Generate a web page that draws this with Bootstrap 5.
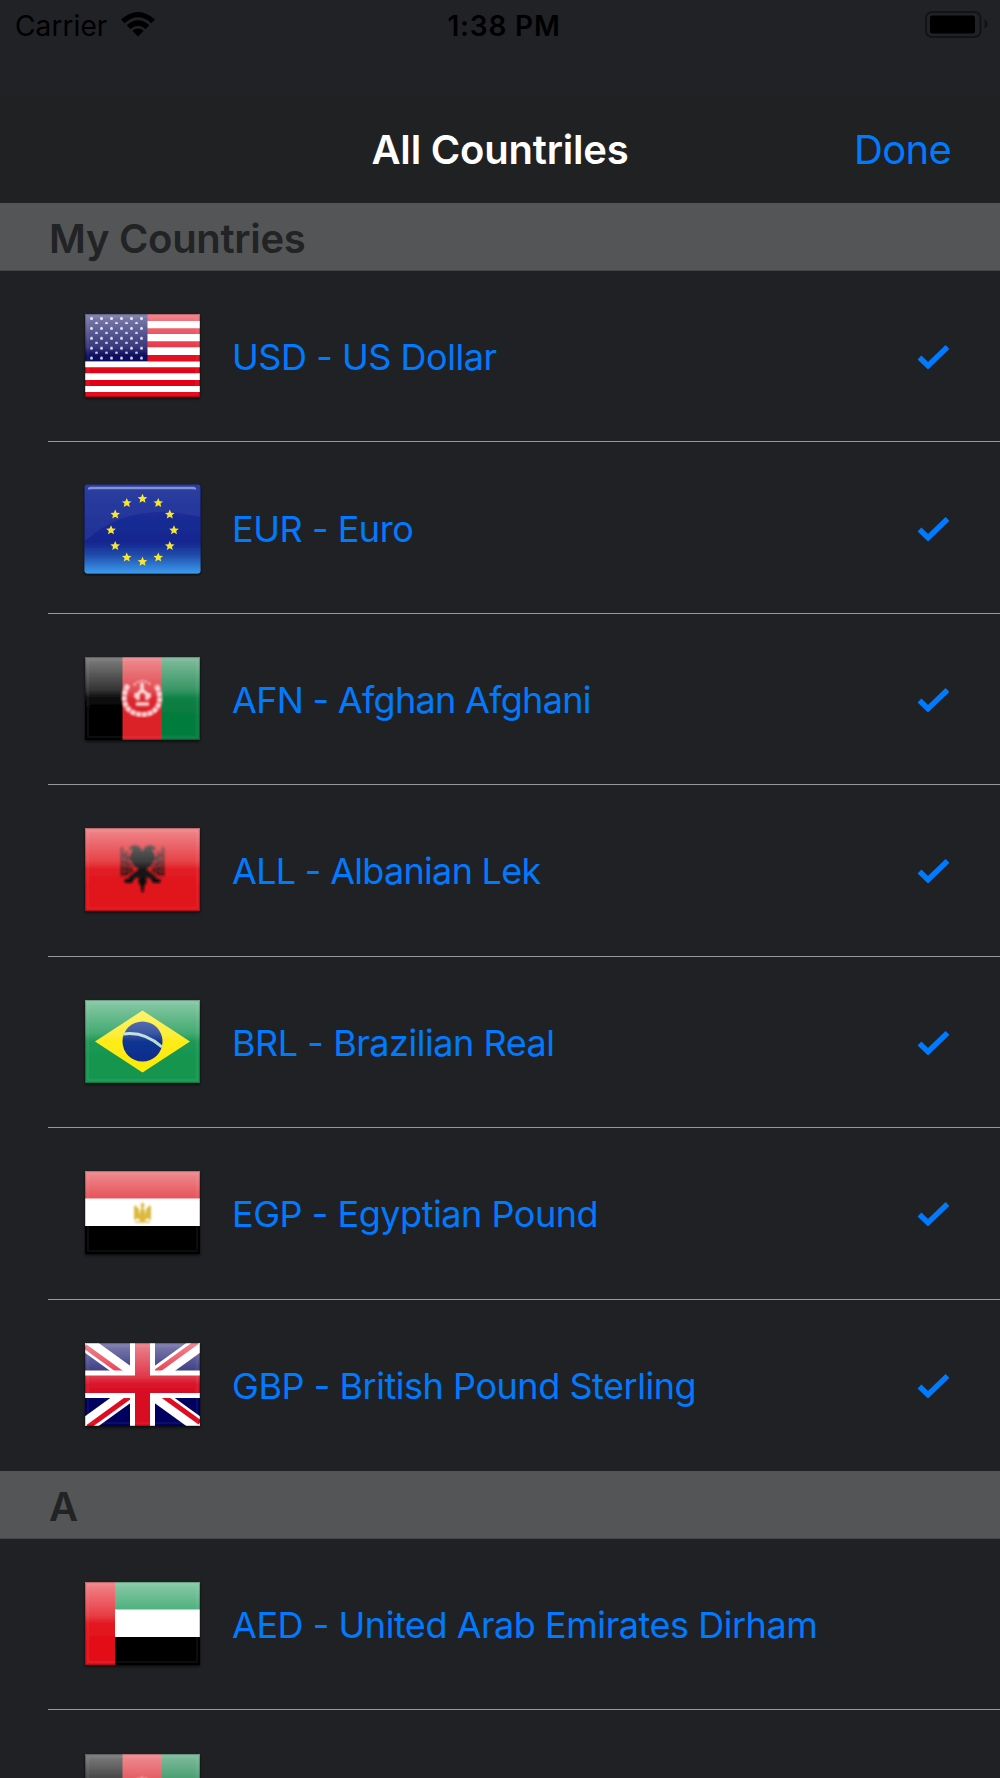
<!DOCTYPE html>
<html lang="en">

<head>
    <meta charset="UTF-8">
    <meta name="viewport" content="width=device-width, initial-scale=1.0">
    <title>All Countriles</title>
    <!-- Bootstrap CSS -->
    <link href="https://cdn.jsdelivr.net/npm/bootstrap@5.3.0/dist/css/bootstrap.min.css" rel="stylesheet">
    <style>
        body {
            height: 1778px;
            background: #202124;
            color: #007aff;
            font-family: Inter, "Liberation Sans", sans-serif;
        }

        .status-bar {
            height: 97px;
            padding: 10px 11px 0 15px;
            background: #212226;
            color: #000;
            font-size: 28px;
            line-height: 33px;
        }

        .status-carrier { letter-spacing: .1px; }
        .status-time { padding-left: 4px; letter-spacing: .8px; font-weight: 600; }
        .wifi { margin: 2px 0 0 14px; }

        .title-bar {
            height: 106px;
            padding: 0 49px;
            background: #1f2122;
        }

        .title-bar h1 { font-size: 40px; line-height: 1; letter-spacing: -.2px; }
        .done-btn { margin-top: -1px; font-size: 40px; line-height: 1; letter-spacing: -.7px; color: #007aff; }

        .section-title {
            height: 68px;
            padding: 5px 0 0 49px;
            background: #545557;
            border-bottom: 1px solid #454648;
            color: #222324;
            font-size: 40px;
            font-weight: 600;
            line-height: 1;
            letter-spacing: -.3px;
        }

        .country-list { height: 1200px; }
        .country-list-short { height: 239px; }

        .country-row {
            height: 171.43px;
            padding: 0 51px 0 34px;
            margin-left: 48px;
            font-size: 36px;
            line-height: 1;
        }

        .country-row:not(:last-child) { border-bottom: 1px solid #97989a; }
        .country-name { margin-left: 29px; padding-top: 2px; letter-spacing: -.46px; }
        .country-name-tight { letter-spacing: -.7px; }
        .flag { width: 121px; height: 95px; margin-top: 1px; }
    </style>
</head>

<body class="overflow-hidden">
    <div class="status-bar d-flex justify-content-between">
        <div class="d-flex col">
            <span class="status-carrier">Carrier</span>
            <svg class="wifi" width="34" height="25" viewBox="0 0 34 25">
                <path d="M0 7.5Q17 -7.5 34 7.5L30.4 11.2Q17 -.5 3.6 11.2Z" />
                <path d="M5.7 13.2Q17 3.2 28.3 13.2L24.6 16.9Q17 10.5 9.4 16.9Z" />
                <path d="M11.3 18.8Q17 14.2 22.7 18.8L17 24.5Z" />
            </svg>
        </div>
        <span class="status-time">1:38 PM</span>
        <div class="col">
            <svg class="d-block ms-auto" width="64" height="29" viewBox="0 0 64 29">
                <rect x="1" y="2" width="54.500" height="25" rx="6" fill="none" stroke="#121315" stroke-width="2" />
                <rect x="5" y="5.500" width="45" height="18" rx="2.5" />
                <path d="M59.500 9.500Q62.800 11 62.800 14T59.500 18.500Z" fill="#121315" />
            </svg>
        </div>
    </div>

    <header class="title-bar d-flex align-items-center">
        <span class="col"></span>
        <h1 class="fw-semibold text-white m-0">All Countriles</h1>
        <div class="col text-end">
            <button type="button" class="done-btn btn p-0 border-0">Done</button>
        </div>
    </header>

    <h2 class="section-title d-flex align-items-center m-0">My Countries</h2>
    <div id="myCountries" class="country-list"></div>
    <h2 class="section-title d-flex align-items-center m-0">A</h2>
    <div id="countriesA" class="country-list-short overflow-hidden"></div>

    <!-- Shared gradients and flag artwork -->
    <svg width="0" height="0" class="position-absolute">
        <defs>
            <linearGradient id="gloss" x2="0" y2="1">
                <stop offset="0" stop-color="#fff" stop-opacity=".5" />
                <stop offset=".4" stop-color="#fff" stop-opacity=".2" />
                <stop offset=".5" stop-color="#fff" stop-opacity=".04" />
                <stop offset=".7" stop-color="#fff" stop-opacity="0" />
            </linearGradient>
            <linearGradient id="euBlue" x2="0" y2="1">
                <stop offset="0" stop-color="#20349c" />
                <stop offset=".65" stop-color="#152690" />
                <stop offset=".78" stop-color="#1e48a8" />
                <stop offset="1" stop-color="#3b9bee" />
            </linearGradient>
            <pattern id="usStars" width="10" height="9.9" patternUnits="userSpaceOnUse">
                <circle cx="6.5" cy="4.5" r="1.5" fill="#dcdcee" />
                <circle cx="1.5" cy="9.4" r="1.5" fill="#dcdcee" />
                <circle cx="11.5" cy="9.4" r="1.5" fill="#dcdcee" />
            </pattern>
            <filter id="soften"><feGaussianBlur stdDeviation=".8" /></filter>
            <filter id="flagShadow" x="-10%" y="-10%" width="120%" height="130%">
                <feGaussianBlur in="SourceGraphic" stdDeviation=".5" result="art" />
                <feDropShadow in="art" dx="0" dy="1.5" stdDeviation="1.5" flood-color="#000" flood-opacity=".7" />
            </filter>

            <g id="us">
                <path fill="#fff" d="M0 0h115v83H0z" />
                <path fill="#e30519" d="M0 0h115v7H0zM0 14.3h115v5.7H0zM0 27.3h115v6H0zM0 41h115v6.5H0zM0 53.3h115v6H0zM0 66h115v6H0zM0 78h115v5H0z" />
                <path fill="#04045c" d="M0 0h62.5v47H0z" />
                <path fill="url(#usStars)" d="M3 1h56v45.5H3z" />
            </g>
            <g id="af">
                <path d="M0 0h38v83H0z" />
                <path fill="#db2028" d="M37.5 0h40v83h-40z" />
                <path fill="#057b3d" d="M77 0h38v83H77z" />
                <g fill="none" stroke="#fad3d5" filter="url(#soften)">
                    <path stroke-width="5" stroke-dasharray="5 .8" d="M43 28C35 42 40 57 57 57.500S79 42 71 28" />
                    <path stroke-width="2" d="M49 28Q57 20 66 28" stroke-dasharray="2 2" />
                    <path stroke-width="3.500" d="M51 47h13M51 41v-5M64 41v-5M53 43v-6l4-4 5 4v6M57 32v-6" />
                </g>
            </g>
            <g id="al">
                <path fill="#e0141b" d="M0 0h115v83H0z" />
                <g filter="url(#soften)" fill="#101010">
                    <path d="M57.500 24C55 15 46 16 44 21l4 1c-2 3-4 6-3 9l4 7 5 3-5 4-4 3-2 3-4 0 1 4 7 0 3-5 4-1-1 5 3 4 0 4 1.500 3 1.500-3v-4l3-4-1-5 4 1 3 5 7 0 1-4-4 0-2-3-4-3-5-4 5-3 4-7c1-3-1-6-3-9l4-1c-2-5-11-6-13.500 3z" />
                    <path fill="none" stroke="#101010" stroke-width="2.500" stroke-opacity=".8" d="M37 19v29M41.500 23v25M78 19v29M73.500 23v25M36 25l10 7M36 33l11 4M36 40l12 1M36 47l12-4M79 25l-10 7M79 33l-11 4M79 40l-12 1M79 47l-12-4" />
                </g>
            </g>
            <g id="br">
                <path fill="#159550" d="M0 0h115v83H0z" />
                <path fill="#fdea10" d="M10 41.500L57.500 10.500 105 41.500 57.500 72.500z" />
                <circle cx="57.500" cy="41.500" r="20" fill="#082d8d" />
                <path d="M38.500 34Q59 31 77 47" fill="none" stroke="#b5dcd5" stroke-width="3" />
            </g>
            <g id="eg">
                <path fill="#dd1a22" d="M0 0h115v28H0z" />
                <path d="M0 55h115v28H0z" />
            </g>
            <g id="egTop">
                <path fill="#fff" d="M0 27.500h115V55H0z" />
                <g filter="url(#soften)" fill="#dcb83e">
                    <path d="M50 34l4 4 0 9-5 2V36zM65 34l-4 4 0 9 5 2V36z" />
                    <path d="M57.500 31l2 3-1 3 2 5 1 6-4 4-4-4 1-6 2-5-1-3z" />
                    <path d="M50 50h15v2H50z" opacity=".7" />
                </g>
            </g>
            <g id="gb">
                <path fill="#00005f" d="M0 0h115v83H0z" />
                <path stroke="#fff" stroke-width="16" d="M0 0L115 83M115 0L0 83" />
                <path stroke="#df0d20" stroke-width="5" d="M0 3.500L57.500 45M115 79.500L57.500 38M112 -1L57.500 38.500M3 84L57.500 44.500" />
                <path fill="#fff" d="M45 0h25v83H45zM0 27.500h115V55H0z" />
                <path fill="#d80a20" d="M50 0h15v83H50zM0 32.500h115V50H0z" />
            </g>
            <g id="ae">
                <path fill="#149653" d="M0 0h115v28H0z" />
                <path d="M0 55h115v28H0z" />
                <path fill="#e20f18" d="M0 0h30v83H0z" />
            </g>
            <g id="aeTop">
                <path fill="#fff" d="M30 27.500h85V55H30z" />
            </g>
        </defs>
    </svg>

    <!-- Bootstrap JS -->
    <script src="https://cdn.jsdelivr.net/npm/bootstrap@5.3.0/dist/js/bootstrap.bundle.min.js"></script>
    <script>
        const myCountries = [
            { flag: 'us', name: 'USD - US Dollar' },
            { flag: 'eu', name: 'EUR - Euro' },
            { flag: 'af', name: 'AFN - Afghan Afghani', tight: true },
            { flag: 'al', name: 'ALL - Albanian Lek', tight: true },
            { flag: 'br', name: 'BRL - Brazilian Real' },
            { flag: 'eg', name: 'EGP - Egyptian Pound' },
            { flag: 'gb', name: 'GBP - British Pound Sterling' }
        ];
        // The second row is only a peek of the next flag
        const countriesA = [
            { flag: 'ae', name: 'AED - United Arab Emirates Dirham' },
            { flag: 'af', name: '' }
        ];

        const checkmark = `
            <svg class="ms-auto" width="32" height="26" viewBox="0 0 32 26">
                <path d="M2.500 14.500L11 22.700 30.500 4" fill="none" stroke="#007aff" stroke-width="5.500" />
            </svg>`;

        // Twelve stars on a circle, one every 30 degrees
        function euFlag() {
            let stars = '';
            for (let i = 0; i < 12; i++) {
                const x = 57.5 + 31.5 * Math.sin(i * Math.PI / 6);
                const y = 44 - 31.5 * Math.cos(i * Math.PI / 6);
                stars += `<path transform="translate(${x} ${y})" d="M0 -4.800L1.400 -1.500 4.800 -1.300 2.200 .9 3 4.300 0 2.500 -3 4.300 -2.200 .9 -4.800 -1.300 -1.400 -1.500Z" />`;
            }
            return `
                <rect x="-.5" y="-1.500" width="116" height="89" rx="3" fill="url(#euBlue)" />
                <path d="M0 55Q45 14 115 31V-1H0Z" fill="#fff" opacity=".05" />
                <path d="M4 3.500Q4 2 6 2H108Q110 2 110 3.500" fill="none" stroke="#8591d0" stroke-width="2.500" />
                <g fill="#f8e632">${stars}</g>`;
        }

        function flagArt(code) {
            if (code === 'eu') {
                return euFlag();
            }
            const top = code === 'eg' || code === 'ae' ? `<use href="#${code}Top" />` : '';
            return `
                <svg width="115" height="83"><use href="#${code}" /></svg>
                <path fill="url(#gloss)" d="M0 0h115v83H0z" />
                <path fill="none" stroke="#fff" stroke-opacity=".05" stroke-width="2.500" d="M3 3h109v77H3z" />
                ${top}
                <path fill="none" stroke="#000" stroke-opacity=".2" d="M.5 .5h114v82H.5z" />`;
        }

        function renderList(id, countries, checked) {
            document.getElementById(id).innerHTML = countries.map(country => `
                <div class="country-row d-flex align-items-center">
                    <svg class="flag" viewBox="-3 -5 121 95"><g filter="url(#flagShadow)">${flagArt(country.flag)}</g></svg>
                    <span class="country-name ${country.tight ? 'country-name-tight' : ''} text-nowrap">${country.name}</span>
                    ${checked ? checkmark : ''}
                </div>`).join('');
        }

        renderList('myCountries', myCountries, true);
        renderList('countriesA', countriesA, false);
    </script>
</body>

</html>
